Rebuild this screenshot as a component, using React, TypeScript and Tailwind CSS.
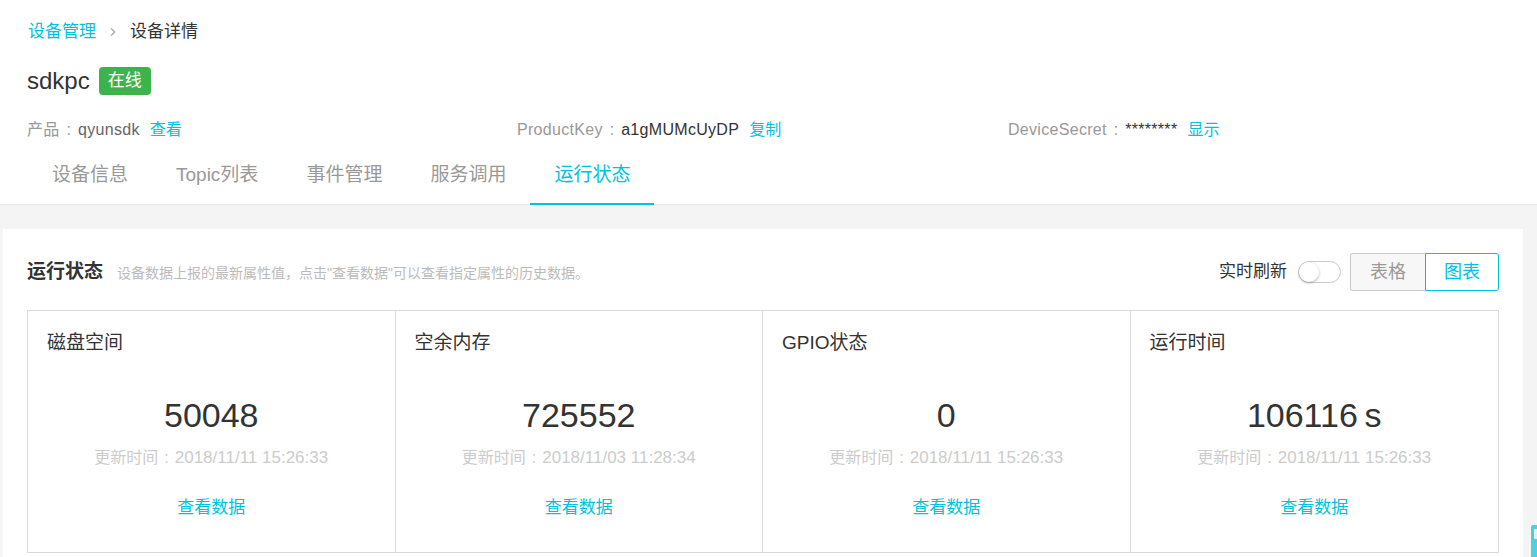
import { ChevronRight } from 'lucide-react'

const font = { fontFamily: '"Liberation Sans", "Noto Sans CJK SC", sans-serif' }

const tabs = ['设备信息', 'Topic列表', '事件管理', '服务调用', '运行状态']

const metrics = [
  { name: '磁盘空间', value: '50048', time: '2018/11/11 15:26:33' },
  { name: '空余内存', value: '725552', time: '2018/11/03 11:28:34' },
  { name: 'GPIO状态', value: '0', time: '2018/11/11 15:26:33' },
  { name: '运行时间', value: '106116\u2009s', time: '2018/11/11 15:26:33' },
]

const info = [
  { label: '产品', value: 'qyunsdk', valueColor: 'text-[#666]', action: '查看' },
  { label: 'ProductKey', value: 'a1gMUMcUyDP', valueColor: 'text-[#333]', action: '复制' },
  { label: 'DeviceSecret', value: '********', valueColor: 'text-[#333]', action: '显示' },
]

export default function App() {
  return (
    <div className="relative min-h-[557px] overflow-hidden bg-[#f4f4f4]" style={font}>
      {/* 顶部信息 */}
      <div className="bg-white border-b border-[#e6e6e6]">
        <div className="px-[28px] pt-[20px]">
          <div className="flex items-center h-6 text-[17px]">
            <span className="text-[#00c1de]">设备管理</span>
            <ChevronRight size={14} className="text-[#aaa] mx-[10px]" />
            <span className="text-[#333]">设备详情</span>
          </div>

          <div className="flex items-center h-7 mt-[23px]">
            <span className="text-[24px] text-[#333] leading-7 -ml-px">sdkpc</span>
            <span className="ml-[9px] h-7 px-[9px] rounded-[4px] bg-[#3cb44b] text-white text-[17px] leading-7">
              在线
            </span>
          </div>

          <div className="grid grid-cols-[490px_491px_1fr] mt-[25px] text-[16px] leading-5 -ml-px">
            {info.map((it) => (
              <div key={it.label} className="whitespace-nowrap">
                <span className="text-[#999] tracking-[0.3px]">{it.label}</span>
                <span className="text-[#999] mx-[7px]">:</span>
                <span className={`${it.valueColor} tracking-[0.3px]`}>{it.value}</span>
                <span className="text-[#00c1de] ml-[10px]">{it.action}</span>
              </div>
            ))}
          </div>
        </div>

        <div className="flex pl-[28px] mt-[6px] -mb-px">
          {tabs.map((t, i) => (
            <div
              key={t}
              className={`h-[59px] pt-px flex items-center justify-center px-6 text-[19px] border-b-2 ${
                i === 4 ? 'text-[#00c1de] border-[#00c1de]' : 'text-[#999] border-transparent'
              }`}
            >
              {t}
            </div>
          ))}
        </div>
      </div>

      {/* 运行状态 */}
      <div className="pt-6 pl-[3px] pr-[14px]">
        <div className="bg-white px-6 pt-6 pb-10">
          <div className="flex items-center justify-between h-[38px]">
            <div className="flex items-baseline">
              <span className="text-[19px] font-bold text-[#333]">运行状态</span>
              <span className="ml-[14px] text-[14px] text-[#bbb]">
                设备数据上报的最新属性值，点击"查看数据"可以查看指定属性的历史数据。
              </span>
            </div>
            <div className="flex items-center">
              <span className="text-[17px] text-[#333]">实时刷新</span>
              <div className="ml-[11px] w-[43px] h-[22px] rounded-full border border-[#ccc] bg-white relative">
                <div className="absolute left-0 top-0 w-5 h-5 rounded-full bg-white shadow-[0_1px_3px_rgba(0,0,0,0.3)]" />
              </div>
              <div className="ml-[9px] flex h-[38px] text-[18px]">
                <div className="w-[75px] flex items-center justify-center border border-[#ccc] border-r-0 rounded-l-[3px] bg-[#f7f7f7] text-[#999]">
                  表格
                </div>
                <div className="w-[74px] flex items-center justify-center border border-[#00c1de] rounded-r-[3px] bg-white text-[#00c1de]">
                  图表
                </div>
              </div>
            </div>
          </div>

          <div className="mt-[19px] grid grid-cols-4 border border-[#d9d9d9]">
            {metrics.map((m, i) => (
              <div
                key={m.name}
                className={`pt-[19px] pb-8 px-[19px] ${i < 3 ? 'border-r border-[#d9d9d9]' : ''}`}
              >
                <div className="text-[19px] leading-[26px] text-[#333]">{m.name}</div>
                <div className="mt-[39px] text-center text-[34px] leading-10 text-[#333]">{m.value}</div>
                <div className="mt-[13px] text-center leading-5 text-[#ccc] whitespace-nowrap">
                  <span className="text-[16px]">更新时间</span>
                  <span className="text-[16px] mx-[6px]">:</span>
                  <span className="text-[17px]">{m.time}</span>
                </div>
                <div className="mt-7 text-center text-[17px] leading-6 text-[#00c1de]">查看数据</div>
              </div>
            ))}
          </div>
        </div>
      </div>

      {/* 右下角浮动按钮 */}
      <div className="absolute right-0 top-[525px] w-[6px] h-10 bg-[#4dd0e1] rounded-tl-[2px] pl-[3px] pt-[4px]">
        <div className="w-[3px] h-[10px] bg-white/80 rounded-l-[1px]" />
      </div>
    </div>
  )
}
